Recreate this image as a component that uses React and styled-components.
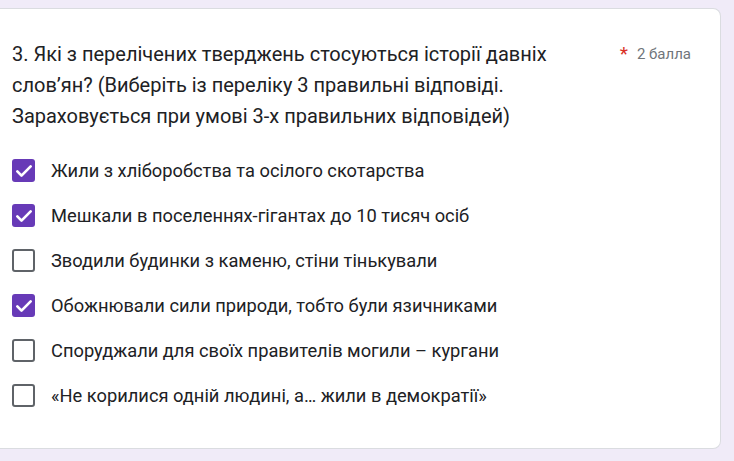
import React from "react";
import styled, { createGlobalStyle } from "styled-components";

const GlobalStyle = createGlobalStyle`
  html, body {
    margin: 0;
    padding: 0;
    background: #f0ebf8;
    font-family: Roboto, "Noto Sans", Arial, sans-serif;
  }
`;

const Page = styled.div`
  padding: 8px 13px 12px 0;
  min-height: 461px;
  box-sizing: border-box;
`;

const Card = styled.section`
  background: #fff;
  border: 1px solid #dadce0;
  border-left: 0;
  border-radius: 0 8px 8px 0;
  padding: 30px 29px 41px 12px;
`;

const Header = styled.div`
  display: flex;
  align-items: flex-start;
  justify-content: space-between;
  margin-bottom: 27px;
`;

const Title = styled.h2`
  margin: 0;
  max-width: 590px;
  font-size: 20px;
  font-weight: 400;
  line-height: 31px;
  color: #202124;
  letter-spacing: 0;
`;

const Points = styled.div`
  display: flex;
  align-items: center;
  gap: 9px;
  padding-top: 5px;
  font-size: 15px;
  color: #70757a;
  white-space: nowrap;
`;

const Star = styled.span`
  color: #d93025;
  font-size: 19px;
  line-height: 1;
`;

const Options = styled.ul`
  list-style: none;
  margin: 0;
  padding: 0;
  display: flex;
  flex-direction: column;
  gap: 22px;
`;

const Option = styled.li`
  display: flex;
  align-items: center;
  gap: 16px;
  height: 23px;
  font-size: 18.3px;
  color: #202124;
`;

const Box = styled.span`
  flex: none;
  width: 23px;
  height: 23px;
  box-sizing: border-box;
  border-radius: 3px;
  display: grid;
  place-items: center;
  background: ${(p) => (p.$checked ? "#673ab7" : "#fff")};
  border: ${(p) => (p.$checked ? "none" : "2px solid #5f6368")};
`;

const Check = () => (
  <svg width="20" height="20" viewBox="0 0 24 24" fill="none">
    <path d="M4 12.5l5 5L20 6.5" stroke="#fff" strokeWidth="3.2" strokeLinecap="round" strokeLinejoin="round" />
  </svg>
);

const answers = [
  { text: "Жили з хліборобства та осілого скотарства", checked: true },
  { text: "Мешкали в поселеннях-гігантах до 10 тисяч осіб", checked: true },
  { text: "Зводили будинки з каменю, стіни тінькували", checked: false },
  { text: "Обожнювали сили природи, тобто були язичниками", checked: true },
  { text: "Споруджали для своїх правителів могили – кургани", checked: false },
  { text: "«Не корилися одній людині, а… жили в демократії»", checked: false },
];

export default function App() {
  return (
    <Page>
      <GlobalStyle />
      <Card>
        <Header>
          <Title>
            3. Які з перелічених тверджень стосуються історії давніх слов’ян? (Виберіть із переліку 3 правильні відповіді. Зараховується при умові 3-х правильних відповідей)
          </Title>
          <Points>
            <Star>*</Star>
            2 балла
          </Points>
        </Header>
        <Options>
          {answers.map((a) => (
            <Option key={a.text}>
              <Box $checked={a.checked}>{a.checked && <Check />}</Box>
              {a.text}
            </Option>
          ))}
        </Options>
      </Card>
    </Page>
  );
}
